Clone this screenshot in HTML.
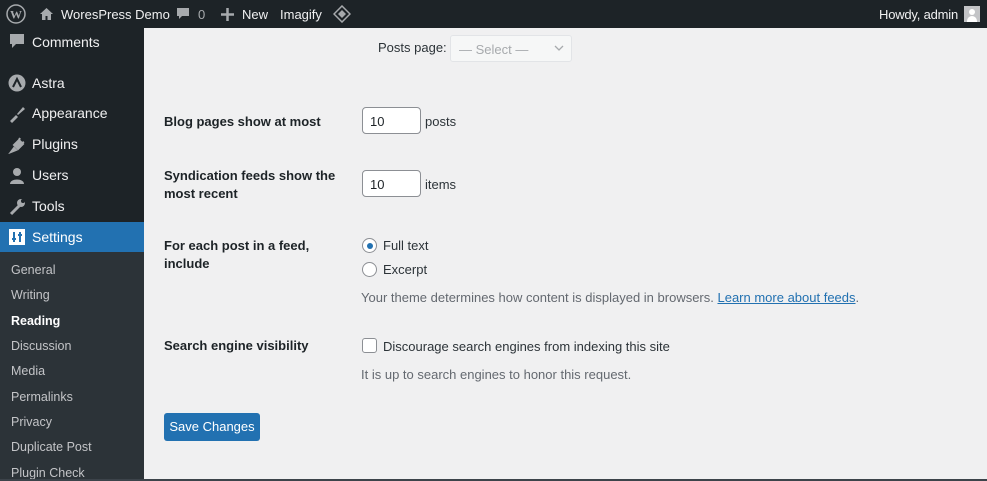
<!DOCTYPE html>
<html style="overflow:hidden;width:987px;height:481px"><head><meta charset="utf-8"><style>
*{margin:0;padding:0;box-sizing:border-box}
body{width:987px;height:481px;overflow:hidden;background:#f0f0f1;font-family:"Liberation Sans",Arial,sans-serif;font-size:13px;color:#1d2327;position:relative}
.bar{position:absolute;left:0;top:0;width:987px;height:28px;background:#1d2327;color:#f0f0f1;font-size:13px}
.bar span{position:absolute;top:7px;white-space:nowrap}
.side{position:absolute;left:0;top:28px;width:144px;height:453px;background:#1d2327;overflow:hidden}
.sub{position:absolute;left:0;top:224px;width:144px;height:229px;background:#2c3338}
.mi{position:absolute;left:32px;color:#f0f0f1;font-size:14px}
.ic{position:absolute;left:8px;width:18px;height:18px}
.si{position:absolute;left:11px;color:#c3c4c7;font-size:12.5px}
.lbl{position:absolute;left:164px;font-weight:bold;font-size:13px;line-height:18px}
.t{position:absolute;font-size:13px;color:#2c3338}
.inp{position:absolute;left:362px;width:59px;height:27px;background:#fff;border:1px solid #8c8f94;border-radius:4px;padding:6px 7px;font-size:13px}
.desc{position:absolute;left:361px;color:#646970;font-size:13px}
.radio{position:absolute;left:362px;width:15px;height:15px;border-radius:50%;border:1px solid #8c8f94;background:#fff}
</style></head><body>
<div class="bar">
<svg style="position:absolute;left:6px;top:4px" width="20" height="20" viewBox="0 0 20 20"><circle cx="10" cy="10" r="9" fill="none" stroke="#a7aaad" stroke-width="1.5"/><text x="10" y="14.5" text-anchor="middle" font-size="12" font-weight="bold" fill="#a7aaad" font-family="Liberation Serif">W</text></svg>
<svg style="position:absolute;left:39px;top:7px" width="15" height="14" viewBox="0 0 15 14"><path d="M7.5 1L1 7h2v6h3.5V9h2v4H12V7h2z" fill="#a7aaad"/></svg>
<span style="left:61px">WoresPress Demo</span>
<svg style="position:absolute;left:176px;top:7px" width="14" height="14" viewBox="0 0 14 14"><path d="M1 1h12v8H6l-3 3V9H1z" fill="#a7aaad"/></svg>
<span style="left:198px;color:#a7aaad">0</span>
<svg style="position:absolute;left:221px;top:8px" width="13" height="13"><path d="M6.5 0v13M0 6.5h13" stroke="#a7aaad" stroke-width="2.5"/></svg>
<span style="left:242px">New</span>
<span style="left:280px">Imagify</span>
<svg style="position:absolute;left:333px;top:5px" width="18" height="18" viewBox="0 0 18 18"><path d="M9 1l8 8-8 8-8-8z" fill="none" stroke="#a7aaad" stroke-width="1.5"/><path d="M9 5l4 4-4 4-4-4z" fill="#a7aaad"/></svg>
<span style="left:879px;letter-spacing:-0.2px">Howdy, admin</span>
<div style="position:absolute;left:964px;top:6px;width:16px;height:16px;background:#c3c4c7"><div style="position:absolute;left:5px;top:3px;width:6px;height:6px;border-radius:50%;background:#fff"></div><div style="position:absolute;left:3px;top:10px;width:10px;height:6px;border-radius:5px 5px 0 0;background:#fff"></div></div>
</div>
<div class="side">
<div class="sub"></div>
<div style="position:absolute;left:0;top:194px;width:144px;height:30px;background:#2271b1"></div>
<div style="position:absolute;left:136px;top:202px;width:0;height:0;border:8px solid transparent;border-right-color:#f0f0f1"></div>
<svg class="ic" style="top:5px" viewBox="0 0 18 18"><path d="M2 1h14v10H8l-4 4v-4H2z" fill="#a7aaad"/></svg>
<div class="mi" style="top:6px">Comments</div>
<svg class="ic" style="top:46px" viewBox="0 0 18 18"><circle cx="9" cy="9" r="8.5" fill="#a7aaad"/><path d="M5 13l4-8 4 8" stroke="#1d2327" stroke-width="2" fill="none"/></svg>
<div class="mi" style="top:47px">Astra</div>
<svg class="ic" style="top:77px" viewBox="0 0 18 18"><path d="M2 16l6-6 2 2-6 6zM9 9l6-7 2 2-7 6z" fill="#a7aaad"/></svg>
<div class="mi" style="top:77px">Appearance</div>
<svg class="ic" style="top:108px" viewBox="0 0 18 18"><path d="M3 16l3-4 2 2zM6 9l5-5 4 4-5 5zM12 2l-1 2M16 6l-2 1" stroke="#a7aaad" stroke-width="2" fill="#a7aaad"/></svg>
<div class="mi" style="top:108px">Plugins</div>
<svg class="ic" style="top:139px" viewBox="0 0 18 18"><circle cx="9" cy="5" r="4" fill="#a7aaad"/><path d="M2 17c0-6 14-6 14 0z" fill="#a7aaad"/></svg>
<div class="mi" style="top:139px">Users</div>
<svg class="ic" style="top:170px" viewBox="0 0 18 18"><path d="M3 16L11 8" stroke="#a7aaad" stroke-width="3"/><circle cx="13" cy="5" r="4" fill="#a7aaad"/><circle cx="15" cy="3" r="2" fill="#1d2327"/></svg>
<div class="mi" style="top:170px">Tools</div>
<svg class="ic" style="top:200px" viewBox="0 0 18 18"><rect x="1" y="1" width="16" height="16" fill="#fff"/><path d="M6 4v10M12 4v10M4 11h4M10 7h4" stroke="#2271b1" stroke-width="2"/></svg>
<div class="mi" style="top:201px;color:#fff">Settings</div>
<div class="si" style="top:235px">General</div>
<div class="si" style="top:260px">Writing</div>
<div class="si" style="top:286px;color:#fff;font-weight:bold">Reading</div>
<div class="si" style="top:311px">Discussion</div>
<div class="si" style="top:336px">Media</div>
<div class="si" style="top:362px">Permalinks</div>
<div class="si" style="top:387px">Privacy</div>
<div class="si" style="top:412px">Duplicate Post</div>
<div class="si" style="top:438px">Plugin Check</div>
</div>
<div class="t" style="left:378px;top:40px">Posts page:</div>
<div style="position:absolute;left:450px;top:35px;width:122px;height:27px;border:1px solid #e2e4e7;border-radius:3px;background:#f6f7f7;color:#a7aaad;padding:6px 8px;font-size:13px">— Select —<svg style="position:absolute;right:7px;top:9px" width="10" height="7"><path d="M1 1l4 4 4-4" stroke="#a7aaad" fill="none" stroke-width="1.3"/></svg></div>
<div class="lbl" style="top:113px">Blog pages show at most</div>
<div class="inp" style="top:107px">10</div>
<div class="t" style="left:425px;top:114px">posts</div>
<div class="lbl" style="top:167px">Syndication feeds show the<br>most recent</div>
<div class="inp" style="top:170px">10</div>
<div class="t" style="left:425px;top:177px">items</div>
<div class="lbl" style="top:237px">For each post in a feed,<br>include</div>
<div class="radio" style="top:238px"><div style="position:absolute;left:3.5px;top:3.5px;width:6px;height:6px;border-radius:50%;background:#2271b1"></div></div>
<div class="t" style="left:383px;top:238px">Full text</div>
<div class="radio" style="top:262px"></div>
<div class="t" style="left:383px;top:262px">Excerpt</div>
<div class="desc" style="top:290px">Your theme determines how content is displayed in browsers. <span style="color:#2271b1;text-decoration:underline">Learn more about feeds</span>.</div>
<div class="lbl" style="top:337px">Search engine visibility</div>
<div style="position:absolute;left:362px;top:338px;width:15px;height:15px;border:1px solid #8c8f94;border-radius:3px;background:#fff"></div>
<div class="t" style="left:383px;top:339px">Discourage search engines from indexing this site</div>
<div class="desc" style="top:367px">It is up to search engines to honor this request.</div>
<div style="position:absolute;left:164px;top:413px;width:96px;height:28px;background:#2271b1;border-radius:3px;color:#fff;font-size:13px;text-align:center;line-height:28px">Save Changes</div>
<div style="position:absolute;left:0;top:479px;width:987px;height:2px;background:#3c434a"></div>
</body></html>
